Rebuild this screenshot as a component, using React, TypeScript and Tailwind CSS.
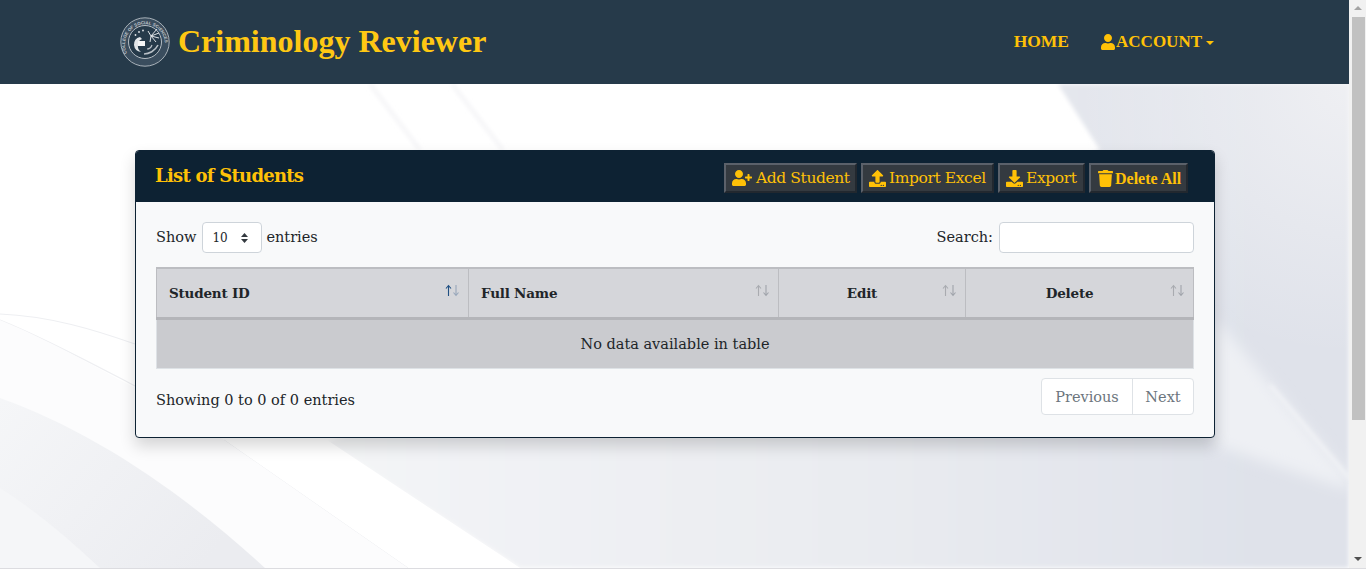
import React from "react";
import { FaUser, FaUserPlus, FaUpload, FaDownload, FaTrash } from "react-icons/fa";

const Background = () => (
  <svg className="absolute inset-0 h-full w-full" viewBox="0 0 1349 568" preserveAspectRatio="none">
    <defs>
      <linearGradient id="rightShade" gradientUnits="userSpaceOnUse" x1="330" y1="0" x2="1260" y2="0">
        <stop offset="0" stopColor="#f4f5f7" />
        <stop offset="0.6" stopColor="#e9ebf0" />
        <stop offset="1" stopColor="#dfe2ea" />
      </linearGradient>
      <radialGradient id="cornerFade" gradientUnits="userSpaceOnUse" cx="1349" cy="84" r="270">
        <stop offset="0" stopColor="#f4f4f6" stopOpacity="0.75" />
        <stop offset="1" stopColor="#f4f4f6" stopOpacity="0" />
      </radialGradient>
      <linearGradient id="leftCurve" gradientUnits="userSpaceOnUse" x1="0" y1="400" x2="200" y2="568">
        <stop offset="0" stopColor="#f5f6f8" />
        <stop offset="1" stopColor="#ebecf0" />
      </linearGradient>
      <filter id="soft" x="-10%" y="-10%" width="120%" height="120%">
        <feGaussianBlur stdDeviation="2" />
      </filter>
      <filter id="softer" x="-20%" y="-20%" width="140%" height="140%">
        <feGaussianBlur stdDeviation="7" />
      </filter>
    </defs>
    <rect width="1349" height="568" fill="#ffffff" />
    {/* big shaded panel on the right and under the card */}
    <path d="M1058 84 L1349 84 L1349 568 L520 568 L327 443 L1100 150 Z" fill="url(#rightShade)" filter="url(#soft)" />
    <rect x="1060" y="84" width="289" height="280" fill="url(#cornerFade)" />
    <path d="M1215 318 L1349 478 L1349 490 L1215 445 Z" fill="#eef0f4" filter="url(#softer)" />
    <path d="M1270 385 L1349 478" stroke="#f3f4f7" strokeWidth="3" fill="none" filter="url(#soft)" />
    {/* white band lower middle */}
    <path d="M224 440 L327 440 L520 568 L408 568 Z" fill="#ffffff" />
    <path d="M224 440 L408 568" stroke="#eeeff2" strokeWidth="1" fill="none" />
    {/* curves lower left */}
    <path d="M0 314 C50 316 95 330 135 344" fill="none" stroke="#eeeff2" strokeWidth="1.2" />
    <path d="M0 320 C45 338 95 365 135 386" fill="none" stroke="#eeeff2" strokeWidth="1.2" />
    <path d="M0 320 C60 345 100 370 135 388 L224 440 L408 568 L265 568 C180 490 90 430 0 398 Z" fill="#fcfcfd" />
    <path d="M0 398 C90 430 180 490 265 568 L0 568 Z" fill="url(#leftCurve)" />
    <path d="M0 488 C35 510 70 540 100 568 L0 568 Z" fill="#f5f6f8" />
    {/* thin streaks under the header */}
    <path d="M370 84 L420 150 M452 84 L503 150" stroke="#f2f2f5" strokeWidth="3" fill="none" filter="url(#soft)" />
  </svg>
);

const Logo = () => (
  <svg width="50" height="50" viewBox="0 0 50 50" className="shrink-0">
    <defs>
      <path id="ringTop" d="M7 36 A20 20 0 1 1 43 36" />
    </defs>
    <circle cx="25" cy="25" r="24.2" fill="#3a4d5e" stroke="#b6bdc4" strokeWidth="0.9" />
    <circle cx="25" cy="25" r="16.5" fill="#263a4a" stroke="#b6bdc4" strokeWidth="1" />
    <text fontSize="4.4" fill="#c4cacf" fontFamily="Liberation Sans, sans-serif" fontWeight="700">
      <textPath href="#ringTop">COLLEGE OF SOCIAL SCIENCES</textPath>
    </text>
    <path d="M20 20 a8 8 0 0 0 -6 8 a8 8 0 0 0 7 7 a7 7 0 0 1 -3 -7 a6 6 0 0 1 4 -6 Z" fill="#e3e6e9" />
    <rect x="18" y="24" width="7" height="5" fill="#f4f5f6" />
    <path d="M31 19 l6 -7 M31 19 l8 -3 M31 19 l8 2 M31 19 l5 6 M31 19 l-3 -5 M31 19 l-1 6" stroke="#dfe3e6" strokeWidth="1" />
    <path d="M24 37 c5 0 11 -3 14 -9" fill="none" stroke="#b8bfc6" strokeWidth="1.6" />
    <path d="M27 32 c2 0 4 -1 5 -4" fill="none" stroke="#b8bfc6" strokeWidth="1.2" />
    <circle cx="19" cy="15" r="0.9" fill="#e3e6e9" />
    <circle cx="23" cy="13.5" r="0.9" fill="#e3e6e9" />
    <circle cx="15.5" cy="18" r="0.9" fill="#e3e6e9" />
  </svg>
);

const HeaderButton = ({
  icon,
  label,
  bold,
  width,
}: {
  icon: React.ReactNode;
  label: string;
  bold?: boolean;
  width: string;
}) => (
  <button
    className={`flex h-[30px] items-center whitespace-nowrap border-2 border-t-[#5b616a] border-l-[#5b616a] border-r-[#22282f] border-b-[#22282f] bg-[#343a40] pl-[6px] text-[#ffc107] ${width} ${
      bold
        ? "gap-[1px] font-['Liberation_Serif',serif] text-[16px] font-bold"
        : "gap-[3px] font-['DejaVu_Serif',serif] text-[15.5px] tracking-[-0.4px]"
    }`}
  >
    {icon}
    <span className="mt-[2px]">{label}</span>
  </button>
);

const SortArrows = ({ active }: { active?: boolean }) => (
  <svg width="15" height="13" viewBox="0 0 15 13" fill="none" strokeWidth="1.1" className="absolute right-[8px] top-[15px]">
    <path d="M3.5 12 V1.5 M1 4.5 L3.5 1.5 L6 4.5" stroke={active ? "#1f4f82" : "#a9abb0"} />
    <path d="M11 1 V11.5 M8.5 8.5 L11 11.5 L13.5 8.5" stroke={active ? "#98a7bb" : "#a0a4ab"} />
  </svg>
);

const thBase =
  "relative border-x border-t-2 border-b-[3px] border-x-[#bcbdc1] border-t-[#bcbdc1] border-b-[#b4b5b9]";

export default function App() {
  return (
    <div className="h-[571px] overflow-hidden bg-white font-['DejaVu_Serif',serif] text-[14.5px] text-[#212529]">
      <div className="flex h-[568px] overflow-hidden">
        <div className="relative flex min-w-0 flex-1 flex-col">
          <Background />

          <header className="relative flex h-[84px] shrink-0 items-center justify-between bg-[#263a4a] pl-[120px] pr-[135px]">
            <div className="flex items-center gap-[8px]">
              <Logo />
              <span className="-mt-[3px] font-['Liberation_Serif',serif] text-[32px] font-bold text-[#ffc813]">
                Criminology Reviewer
              </span>
            </div>
            <nav className="flex items-center gap-[31px] font-['Liberation_Serif',serif] text-[17px] font-bold text-[#ffc107]">
              <span className="-mt-[1px] text-[17.5px]">HOME</span>
              <span className="flex items-center">
                <FaUser className="text-[16px]" />
                ACCOUNT
                <span className="ml-[4px] mt-[1px] h-0 w-0 border-x-[4px] border-t-[4px] border-x-transparent border-t-[#ffc107]" />
              </span>
            </nav>
          </header>

          <main className="relative pl-[135px] pr-[134px] pt-[66px]">
            <section className="overflow-hidden rounded-[4px] border border-[#0d2233] bg-[#f8f9fa] shadow-[0_8px_16px_rgba(0,0,0,0.16)]">
              <div className="flex h-[51px] items-center justify-between bg-[#0d2233] pl-[19px] pr-[26px]">
                <h2 className="-mt-[3px] font-['DejaVu_Serif',serif] text-[18px] font-bold tracking-[-0.75px] text-[#ffc107]">
                  List of Students
                </h2>
                <div className="mt-[1px] flex gap-[4px] pt-[2px]">
                  <HeaderButton width="w-[133px]" icon={<FaUserPlus className="mr-[1px] text-[20px]" />} label="Add Student" />
                  <HeaderButton width="w-[133px]" icon={<FaUpload className="text-[17px]" />} label="Import Excel" />
                  <HeaderButton width="w-[87px]" icon={<FaDownload className="text-[17px]" />} label="Export" />
                  <HeaderButton width="w-[99px]" icon={<FaTrash className="text-[17px]" />} label="Delete All" bold />
                </div>
              </div>

              <div className="px-[20px] pb-[22px] pt-[20px]">
                <div className="flex h-[31px] items-center justify-between">
                  <div className="flex items-center gap-[6px]">
                    <span>Show</span>
                    <span className="flex h-[31px] w-[60px] items-center justify-between rounded-[4px] border border-[#ced4da] bg-white pl-[9px] pr-[12px] text-[12px]">
                      10
                      <svg width="9" height="12" viewBox="0 0 9 12" fill="#343a40">
                        <path d="M4.5 1 L8 5 L1 5 Z M4.5 11 L8 7 L1 7 Z" />
                      </svg>
                    </span>
                    <span className="-ml-[2px]">entries</span>
                  </div>
                  <div className="flex items-center gap-[6px]">
                    <span>Search:</span>
                    <span className="h-[31px] w-[195px] rounded-[4px] border border-[#ced4da] bg-white" />
                  </div>
                </div>

                <table className="mt-[14px] w-full table-fixed border-collapse">
                  <thead>
                    <tr className="h-[50px] bg-[#d5d6da] text-[13.5px] font-bold tracking-[-0.2px]">
                      <th className={`${thBase} w-[312px] pl-[12px] text-left`}>
                        Student ID
                        <SortArrows active />
                      </th>
                      <th className={`${thBase} w-[310px] pl-[12px] text-left`}>
                        Full Name
                        <SortArrows />
                      </th>
                      <th className={`${thBase} w-[187px] pr-[20px] text-center`}>
                        Edit
                        <SortArrows />
                      </th>
                      <th className={`${thBase} pr-[20px] text-center`}>
                        Delete
                        <SortArrows />
                      </th>
                    </tr>
                  </thead>
                  <tbody>
                    <tr className="h-[50px] bg-[#cacbcf]">
                      <td colSpan={4} className="border border-[#dee2e6] pt-[3px] text-center">
                        No data available in table
                      </td>
                    </tr>
                  </tbody>
                </table>

                <div className="mt-[9px] flex items-center justify-between">
                  <span className="mt-[9px]">Showing 0 to 0 of 0 entries</span>
                  <div className="flex h-[37px] overflow-hidden rounded-[4px] border border-[#dee2e6] bg-white text-[#6c757d]">
                    <span className="flex w-[91px] items-center justify-center border-r border-[#dee2e6] pt-[3px]">Previous</span>
                    <span className="flex w-[60px] items-center justify-center pt-[3px]">Next</span>
                  </div>
                </div>
              </div>
            </section>
          </main>
        </div>

        <div className="relative flex w-[17px] shrink-0 flex-col items-center bg-[#f1f1f1] pt-[17px]">
          <span className="absolute top-[6px] h-0 w-0 border-x-[4px] border-b-[4px] border-x-transparent border-b-[#a3a3a3]" />
          <div className="ml-[1px] h-[403px] w-[13px] bg-[#c1c1c1]" />
          <span className="absolute bottom-[7px] h-0 w-0 border-x-[4px] border-t-[4px] border-x-transparent border-t-[#505050]" />
        </div>
      </div>
      <div className="h-px bg-[#dcdce0]" />
    </div>
  );
}
